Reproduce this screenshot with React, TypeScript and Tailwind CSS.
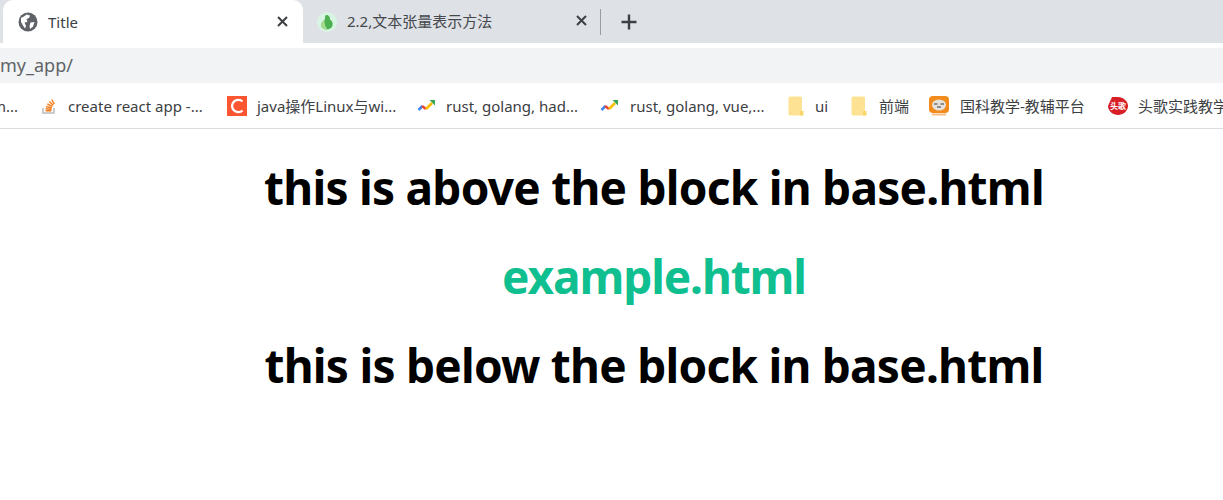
const sans = '"Noto Sans","Noto Sans CJK SC",sans-serif';

function Close({ className = "" }: { className?: string }) {
  return (
    <svg width="11" height="11" viewBox="0 0 11 11" className={className}>
      <path d="M1 1L10 10M10 1L1 10" stroke="#3c4043" strokeWidth="2" />
    </svg>
  );
}

function Globe() {
  return (
    <svg width="20" height="20" viewBox="0 0 20 20">
      <circle cx="10" cy="10" r="9.500" fill="#5f6368" />
      <path d="M3 6C5 5 7 4 8.500 2.500L12 3.500L11 6L8.500 7L9.500 10L6.500 10.500L8 14L7 16.500L5 13.500L3 10Z" fill="#fff" />
      <path d="M12.500 10.500L16.500 10L15 14.500L12 17L11.500 14Z" fill="#fff" />
    </svg>
  );
}

function Gourd() {
  return (
    <svg width="20" height="20" viewBox="0 0 20 20">
      <circle cx="10" cy="10" r="10" fill="#d8f5e3" />
      <path d="M9 3C12 2.500 13 5.500 13 7.500C16 9.500 16.500 13 14.500 15.500C12 18 7 18 5 15.500C3 13 5 9.500 7.500 8C8.500 6.500 7.500 4 9 3Z" fill="#4caf50" />
      <path d="M5 15.500C3 13 5 9.500 7.500 8C7.500 11 8 15 10.500 17.300C8 17.500 6 17 5 15.500Z" fill="#a5dd8d" />
    </svg>
  );
}

function Stack() {
  return (
    <svg width="16" height="18" viewBox="0 0 16 18">
      <path d="M2 11V16H13V11" fill="none" stroke="#bcbbbb" strokeWidth="1.500" />
      <path d="M4.500 13.800H10.500M4.600 11.800L10.500 12.500M5 9.500L10.800 11M6.300 6.800L11.300 9.500M8.300 4.500L12.300 8.300M10.700 2.500L13.200 7" stroke="#f48024" strokeWidth="1.500" fill="none" />
    </svg>
  );
}

function Csdn() {
  return (
    <div className="flex h-[20px] w-[20px] items-center justify-center bg-[#fc5531]">
      <svg width="14" height="16" viewBox="0 0 14 16">
        <path d="M12.500 3.500C10 1 3 1 2 8C3 15 10 15 12.500 12.500" fill="none" stroke="#fff" strokeWidth="2.200" />
      </svg>
    </div>
  );
}

function Trend() {
  return (
    <svg width="19" height="14" viewBox="0 0 19 14">
      <path d="M1.500 11L5.500 7" stroke="#4285f4" strokeWidth="2.600" />
      <path d="M5 7L9 10" stroke="#ea4335" strokeWidth="2.600" />
      <path d="M9 10L15 4" stroke="#fbbc04" strokeWidth="2.600" />
      <path d="M12.500 1H18V6.500Z" fill="#34a853" />
    </svg>
  );
}

function Folder() {
  return (
    <svg width="16" height="20" viewBox="0 0 16 20">
      <path d="M2 0.500H12.500Q14 0.500 14 2V19.500H2Q0.500 19.500 0.500 18V2Q0.500 0.500 2 0.500Z" fill="#fde293" />
      <path d="M12 15H15.500V19.500H12Z" fill="#f9d667" />
    </svg>
  );
}

function Tiger() {
  return (
    <svg width="20" height="20" viewBox="0 0 20 20">
      <rect width="20" height="17" rx="4" fill="#f28a1c" />
      <ellipse cx="10" cy="9" rx="7" ry="5.500" fill="#e5e2de" />
      <path d="M5 8H8.500M11.500 8H15M8 11H12" stroke="#77706a" strokeWidth="1.400" />
      <rect x="3" y="17.500" width="14" height="2" fill="#f7bd80" />
    </svg>
  );
}

function Toutiao() {
  return (
    <div className="relative h-[20px] w-[20px]">
      <svg width="20" height="20" viewBox="0 0 20 20">
        <path d="M10 1C15 1 20 5 20 10C20 15 15 19 10 19C5 19 0 15 0 10L4 1Z" fill="#d81e26" />
      </svg>
      <span className="absolute left-[2px] top-[4px] text-[8px] leading-[11px] font-bold text-white whitespace-nowrap">头歌</span>
    </div>
  );
}

function Bm({ icon, text, w, iw, gap, next }: { icon: React.ReactNode; text: string; w: number; iw: number; gap: number; next: number }) {
  return (
    <div className="flex shrink-0 items-center" style={{ marginRight: next }}>
      <div className="flex shrink-0 justify-center" style={{ width: iw, marginRight: gap }}>{icon}</div>
      <span className="whitespace-nowrap text-[15px] text-[#3c4043]" style={{ width: w }}>{text}</span>
    </div>
  );
}

export default function App() {
  return (
    <div className="h-[500px] w-[1223px] overflow-hidden bg-white" style={{ fontFamily: sans }}>
      <div className="relative h-[43px] bg-[#dee1e6]">
        <div className="flex items-start pl-[3px]">
          <div className="z-10 flex h-[48px] w-[300px] shrink-0 items-center rounded-t-[10px] bg-white pb-[4px] pl-[15px] pr-[15px]">
            <Globe />
            <span className="ml-[10px] flex-1 text-[15px] text-[#3c4043]">Title</span>
            <Close className="mt-[-2px]" />
          </div>
          <div className="flex h-[43px] w-[297px] shrink-0 items-center pl-[14px] pr-[13px]">
            <Gourd />
            <span className="ml-[10px] flex-1 whitespace-nowrap text-[15px] text-[#45484c]">2.2,文本张量表示方法</span>
            <Close className="mt-[-2px]" />
          </div>
          <div className="mt-[9px] h-[26px] w-px shrink-0 bg-[#9a9ea3]" />
          <svg width="16" height="16" viewBox="0 0 16 16" className="ml-[20px] mt-[14px] shrink-0">
            <path d="M8 0.500V15.500M0.500 8H15.500" stroke="#3c4043" strokeWidth="2.400" />
          </svg>
        </div>
      </div>
      <div className="mt-[5px] flex h-[35px] items-center bg-[#f1f3f4] text-[18px] text-[#5f6368]">my_app/</div>
      <div className="flex h-[46px] items-center overflow-hidden border-b border-[#dadce0] pt-[1px] text-[15px]">
        <span className="mr-[23px] ml-[-8px] w-[26px] shrink-0 whitespace-nowrap text-[#3c4043]">m...</span>
        <Bm icon={<Stack />} iw={16} gap={11} text="create react app -..." w={139} next={20} />
        <Bm icon={<Csdn />} iw={20} gap={10} text="java操作Linux与wi..." w={139} next={21} />
        <Bm icon={<Trend />} iw={19} gap={10} text="rust, golang, had..." w={133} next={21} />
        <Bm icon={<Trend />} iw={19} gap={11} text="rust, golang, vue,..." w={135} next={23} />
        <Bm icon={<Folder />} iw={16} gap={11} text="ui" w={14} next={22} />
        <Bm icon={<Folder />} iw={16} gap={12} text="前端" w={30} next={20} />
        <Bm icon={<Tiger />} iw={20} gap={11} text="国科教学-教辅平台" w={126} next={22} />
        <Bm icon={<Toutiao />} iw={20} gap={10} text="头歌实践教学平台" w={120} next={0} />
      </div>
      <div className="flex flex-col items-center gap-[35px] pl-[85px] pt-[31px] text-[46px] leading-[54px] font-bold tracking-[-0.75px] text-black">
        <h1 className="whitespace-nowrap">this is above the block in base.html</h1>
        <h1 className="whitespace-nowrap tracking-[-1.1px] text-[#10bf8f]">example.html</h1>
        <h1 className="whitespace-nowrap">this is below the block in base.html</h1>
      </div>
    </div>
  );
}
